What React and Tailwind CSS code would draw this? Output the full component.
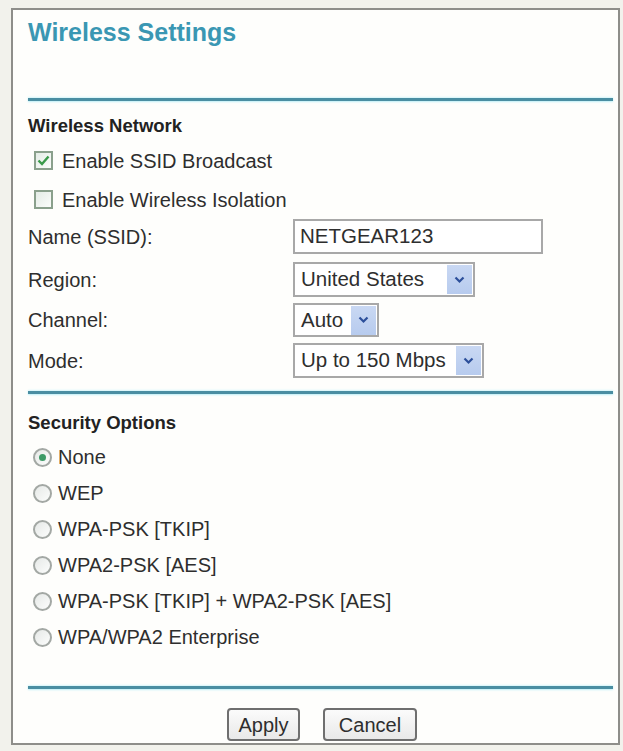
import React from "react";

const font = { fontFamily: '"Liberation Sans", Arial, sans-serif' };

function Divider({ className = "" }) {
  return (
    <div className={"h-[3px] bg-[#4a8ea2] shadow-[0_1px_2px_#bfeff7,0_-1px_2px_#d6f5fa] " + className} />
  );
}

function Checkbox({ checked }) {
  return (
    <div className="ml-[6px] w-[19px] h-[19px] border-2 border-[#8aa08c] bg-gradient-to-br from-[#e4ece6] to-[#fbfdfb] flex items-center justify-center">
      {checked && (
        <svg width="13" height="11" viewBox="0 0 13 11">
          <path d="M1.5 5.5 L5 9 L11.5 1.5" fill="none" stroke="#3a9a4a" strokeWidth="2.4" />
        </svg>
      )}
    </div>
  );
}

function Radio({ checked, label }) {
  return (
    <div className="h-[36px] flex items-center">
      <div className="ml-[5px] w-[19px] h-[19px] rounded-full border-2 border-[#a3a8a4] bg-gradient-to-br from-[#e6e9e7] to-[#fcfdfc] flex items-center justify-center">
        {checked && <div className="w-[7px] h-[7px] rounded-full bg-[#3d9a66]" />}
      </div>
      <span className="ml-[6px] text-[20px] text-[#2e2e2e]">{label}</span>
    </div>
  );
}

function Select({ value, width }) {
  return (
    <div
      className="h-full border-2 border-[#a8a8a8] bg-white flex items-center justify-between pl-[6px] pr-[1px]"
      style={{ width }}
    >
      <span className="text-[20.5px] text-[#2e2e2e]">{value}</span>
      <div className="w-[25px] h-[29px] bg-gradient-to-b from-[#c9d8f3] to-[#b7cbee] flex items-center justify-center">
        <svg width="11" height="8" viewBox="0 0 11 8">
          <path d="M1.5 1.5 L5.5 5.5 L9.5 1.5" fill="none" stroke="#2c4f9a" strokeWidth="2.2" />
        </svg>
      </div>
    </div>
  );
}

function FieldRow({ label, children, className = "" }) {
  return (
    <div className={"flex items-center " + className}>
      <div className="w-[265px] text-[20px] text-[#2e2e2e]">{label}</div>
      <div className="h-full flex">{children}</div>
    </div>
  );
}

export default function App() {
  return (
    <div style={font} className="min-h-screen bg-[#f2f2ec] pt-[8px] pl-[11px]">
      <div className="w-[609px] h-[737px] border-2 border-[#8e8e8a] bg-[#fefefc] flex flex-col pl-[15px] pr-[5px]">
        <div className="mt-[8px] leading-[28px] text-[25px] font-bold text-[#3a97b3]">Wireless Settings</div>
        <Divider className="mt-[52px]" />

        <div className="mt-[10px] h-[30px] flex items-center text-[18.5px] font-bold text-[#222]">Wireless Network</div>
        <div className="h-[39px] flex items-center">
          <Checkbox checked />
          <span className="ml-[9px] text-[20px] text-[#2e2e2e]">Enable SSID Broadcast</span>
        </div>
        <div className="h-[39px] flex items-center">
          <Checkbox />
          <span className="ml-[9px] text-[20px] text-[#2e2e2e]">Enable Wireless Isolation</span>
        </div>

        <FieldRow label="Name (SSID):" className="h-[35px]">
          <div className="w-[250px] h-full border-2 border-[#a8a8a8] bg-white flex items-center pl-[5px]">
            <span className="text-[20.5px] text-[#2e2e2e]">NETGEAR123</span>
          </div>
        </FieldRow>
        <FieldRow label="Region:" className="h-[35px] mt-[8px]">
          <Select value="United States" width={182} />
        </FieldRow>
        <FieldRow label="Channel:" className="h-[34px] mt-[6px]">
          <Select value="Auto" width={86} />
        </FieldRow>
        <FieldRow label="Mode:" className="h-[35px] mt-[6px]">
          <Select value="Up to 150 Mbps" width={191} />
        </FieldRow>

        <Divider className="mt-[13px]" />

        <div className="mt-[14px] h-[30px] flex items-center text-[18.5px] font-bold text-[#222]">Security Options</div>
        <div className="mt-[1px] flex flex-col">
          <Radio checked label="None" />
          <Radio label="WEP" />
          <Radio label="WPA-PSK [TKIP]" />
          <Radio label="WPA2-PSK [AES]" />
          <Radio label="WPA-PSK [TKIP] + WPA2-PSK [AES]" />
          <Radio label="WPA/WPA2 Enterprise" />
        </div>

        <Divider className="mt-[31px]" />

        <div className="mt-[19px] flex justify-center gap-[23px] pl-[3px]">
          <button className="w-[73px] h-[33px] rounded-[4px] border-2 border-[#6f6f6f] bg-gradient-to-b from-[#fbfbfb] to-[#e9e9e9] text-[20px] text-[#2e2e2e]">Apply</button>
          <button className="w-[94px] h-[33px] rounded-[4px] border-2 border-[#6f6f6f] bg-gradient-to-b from-[#fbfbfb] to-[#e9e9e9] text-[20px] text-[#2e2e2e]">Cancel</button>
        </div>
      </div>
    </div>
  );
}
